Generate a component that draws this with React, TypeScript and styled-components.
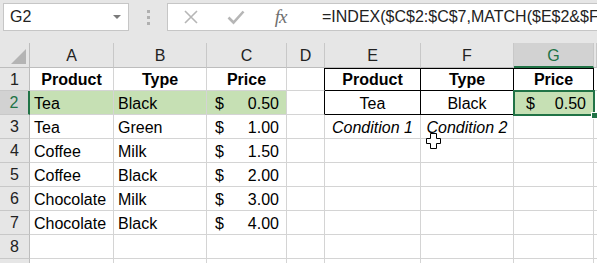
import React from "react";
import styled, { createGlobalStyle, css } from "styled-components";

const GlobalStyle = createGlobalStyle`
  body {
    margin: 0;
    background: #fff;
    font-family: "Liberation Sans", Arial, sans-serif;
  }
`;

const GREEN = "#217346";
const GRID = "#d4d4d4";

const Frame = styled.div`
  width: 597px;
  height: 263px;
  overflow: hidden;
  background: #e6e6e6;
`;

const Toolbar = styled.div`
  height: 43px;
  display: flex;
  align-items: flex-start;
  padding-top: 3px;
  padding-left: 3px;
  box-sizing: border-box;
`;

const NameBox = styled.div`
  width: 126px;
  height: 28px;
  box-sizing: border-box;
  background: #fff;
  border: 1px solid #c6c6c6;
  display: flex;
  align-items: center;
  justify-content: space-between;
  padding: 0 7px 0 6px;
  font-size: 16px;
  color: #222;
`;

const DropArrow = styled.span`
  width: 0;
  height: 0;
  border-left: 4px solid transparent;
  border-right: 4px solid transparent;
  border-top: 4px solid #7a7a7a;
`;

const Grip = styled.div`
  width: 38px;
  height: 28px;
  display: flex;
  flex-direction: column;
  align-items: center;
  justify-content: center;
  gap: 3px;
  span {
    width: 3px;
    height: 3px;
    background: #b0b0b0;
  }
`;

const FormulaBox = styled.div`
  flex: 1;
  height: 28px;
  box-sizing: border-box;
  background: #fff;
  border: 1px solid #c6c6c6;
  border-right: none;
  display: flex;
  align-items: center;
  white-space: nowrap;
  overflow: hidden;
`;

const IconSlot = styled.div`
  width: 45px;
  flex: none;
  display: flex;
  justify-content: center;
  align-items: center;
`;

const Fx = styled.span`
  font-family: "Liberation Serif", "Times New Roman", serif;
  font-style: italic;
  font-size: 19px;
  color: #6f6f6f;
  letter-spacing: -1px;
`;

const FormulaText = styled.span`
  margin-left: 19px;
  font-size: 16px;
  color: #222;
`;

const SheetWrap = styled.div`
  position: relative;
`;

const Sheet = styled.div`
  display: grid;
  grid-template-columns: 30px 84px 93px 80px 38px 96px 93px 80px 3px;
  grid-template-rows: 25px 23px repeat(8, 24px);
  background: #fff;
`;

const Corner = styled.div`
  background: #e6e6e6;
  border-right: 1px solid #bdbdbd;
  border-bottom: 1px solid #bdbdbd;
  box-sizing: border-box;
  position: relative;
  &::after {
    content: "";
    position: absolute;
    right: 3px;
    bottom: 3px;
    border-left: 15px solid transparent;
    border-bottom: 15px solid #b4b4b4;
  }
`;

const ColHead = styled.div<{ $active?: boolean }>`
  background: ${(p) => (p.$active ? "#d2d2d2" : "#e6e6e6")};
  color: ${(p) => (p.$active ? GREEN : "#222")};
  border-right: 1px solid #c8c8c8;
  border-bottom: ${(p) => (p.$active ? `2px solid ${GREEN}` : "1px solid #bdbdbd")};
  box-sizing: border-box;
  display: flex;
  align-items: center;
  justify-content: center;
  padding-top: 2px;
  font-size: 16px;
`;

const RowHead = styled.div<{ $active?: boolean }>`
  background: ${(p) => (p.$active ? "#d2d2d2" : "#e6e6e6")};
  color: ${(p) => (p.$active ? GREEN : "#222")};
  border-right: ${(p) => (p.$active ? `2px solid ${GREEN}` : "1px solid #bdbdbd")};
  border-bottom: 1px solid #c8c8c8;
  box-sizing: border-box;
  display: flex;
  align-items: center;
  justify-content: center;
  padding-top: 1px;
  font-size: 16px;
`;

type CellProps = {
  $fill?: string;
  $align?: "left" | "center";
  $bold?: boolean;
  $italic?: boolean;
  $bt?: boolean;
  $br?: boolean;
  $bb?: boolean;
  $selected?: boolean;
};

const Cell = styled.div<CellProps>`
  position: relative;
  box-sizing: border-box;
  background: ${(p) => p.$fill || "#fff"};
  border-right: 1px solid ${(p) => (p.$br ? "#000" : GRID)};
  border-bottom: 1px solid ${(p) => (p.$bb ? "#000" : GRID)};
  box-shadow: ${(p) => (p.$bt ? "inset 0 1px 0 #000" : "none")};
  display: flex;
  align-items: center;
  justify-content: ${(p) => (p.$align === "center" ? "center" : "flex-start")};
  padding: 2px 4px 0 4px;
  font-size: 16px;
  font-weight: ${(p) => (p.$bold ? 700 : 400)};
  font-style: ${(p) => (p.$italic ? "italic" : "normal")};
  color: #000;
  white-space: nowrap;
  ${(p) =>
    p.$selected &&
    css`
      padding-left: 8px;
      &::before {
        content: "";
        position: absolute;
        left: -1px;
        top: -1px;
        right: -2px;
        bottom: -2px;
        border: 2px solid ${GREEN};
        z-index: 2;
      }
      &::after {
        content: "";
        position: absolute;
        right: -5px;
        bottom: -5px;
        width: 5px;
        height: 5px;
        background: ${GREEN};
        border: 1px solid #fff;
        z-index: 3;
      }
    `}
`;

const Money = styled.div`
  flex: 1;
  display: flex;
  justify-content: space-between;
  padding: 0 3px 0 4px;
`;

const Cursor = styled.svg`
  position: absolute;
  left: 426px;
  top: 90px;
  z-index: 5;
`;

const columns = ["A", "B", "C", "D", "E", "F", "G"];

const data: [string, string, string][] = [
  ["Tea", "Black", "0.50"],
  ["Tea", "Green", "1.00"],
  ["Coffee", "Milk", "1.50"],
  ["Coffee", "Black", "2.00"],
  ["Chocolate", "Milk", "3.00"],
  ["Chocolate", "Black", "4.00"],
];

const XIcon = () => (
  <svg width="16" height="16" viewBox="0 0 16 16">
    <path d="M2 2 L14 14 M14 2 L2 14" stroke="#b6b6b6" strokeWidth="1.6" fill="none" />
  </svg>
);

const CheckIcon = () => (
  <svg width="18" height="16" viewBox="0 0 18 16">
    <path d="M1.5 8.5 L6.5 13.5 L16.5 2.5" stroke="#b6b6b6" strokeWidth="2.6" fill="none" />
  </svg>
);

const Price: React.FC<{ value: string }> = ({ value }) => (
  <Money>
    <span>$</span>
    <span>{value}</span>
  </Money>
);

const App: React.FC = () => {
  const rightSide = (row: number) => {
    if (row === 1)
      return (
        <>
          <Cell $br />
          <Cell $bt $br $bb $bold $align="center">Product</Cell>
          <Cell $bt $br $bb $bold $align="center">Type</Cell>
          <Cell $bt $br $bb $bold $align="center">Price</Cell>
        </>
      );
    if (row === 2)
      return (
        <>
          <Cell $br />
          <Cell $br $bb $align="center">Tea</Cell>
          <Cell $br $bb $align="center">Black</Cell>
          <Cell $br $bb $fill="#c6e0b4" $selected>
            <Price value="0.50" />
          </Cell>
        </>
      );
    if (row === 3)
      return (
        <>
          <Cell />
          <Cell $italic $align="center">Condition 1</Cell>
          <Cell $italic $align="center">Condition 2</Cell>
          <Cell />
        </>
      );
    return (
      <>
        <Cell />
        <Cell />
        <Cell />
        <Cell />
      </>
    );
  };

  return (
    <>
      <GlobalStyle />
      <Frame>
        <Toolbar>
          <NameBox>
            G2
            <DropArrow />
          </NameBox>
          <Grip>
            <span />
            <span />
            <span />
          </Grip>
          <FormulaBox>
            <IconSlot>
              <XIcon />
            </IconSlot>
            <IconSlot>
              <CheckIcon />
            </IconSlot>
            <IconSlot>
              <Fx>fx</Fx>
            </IconSlot>
            <FormulaText>=INDEX($C$2:$C$7,MATCH($E$2&amp;$F$</FormulaText>
          </FormulaBox>
        </Toolbar>
        <SheetWrap>
          <Sheet>
            <Corner />
            {columns.map((c) => (
              <ColHead key={c} $active={c === "G"}>
                {c}
              </ColHead>
            ))}
            <ColHead />

            <RowHead>1</RowHead>
            <Cell $bold $align="center">Product</Cell>
            <Cell $bold $align="center">Type</Cell>
            <Cell $bold $align="center">Price</Cell>
            {rightSide(1)}
            <Cell />

            {data.map(([product, type, price], i) => {
              const row = i + 2;
              const fill = row === 2 ? "#c6e0b4" : undefined;
              return (
                <React.Fragment key={row}>
                  <RowHead $active={row === 2}>{row}</RowHead>
                  <Cell $fill={fill}>{product}</Cell>
                  <Cell $fill={fill}>{type}</Cell>
                  <Cell $fill={fill}>
                    <Price value={price} />
                  </Cell>
                  {rightSide(row)}
                  <Cell />
                </React.Fragment>
              );
            })}

            {[8, 9].map((row) => (
              <React.Fragment key={row}>
                <RowHead>{row === 8 ? row : null}</RowHead>
                <Cell />
                <Cell />
                <Cell />
                {rightSide(row)}
                <Cell />
              </React.Fragment>
            ))}
          </Sheet>
          <Cursor width="15" height="16" viewBox="0 0 15 16">
            <path
              d="M4.5 0.5 H10.5 V5.5 H14.5 V10.5 H10.5 V15.5 H4.5 V10.5 H0.5 V5.5 H4.5 Z"
              fill="#fff"
              stroke="#000"
              strokeWidth="1"
            />
          </Cursor>
        </SheetWrap>
      </Frame>
    </>
  );
};

export default App;
